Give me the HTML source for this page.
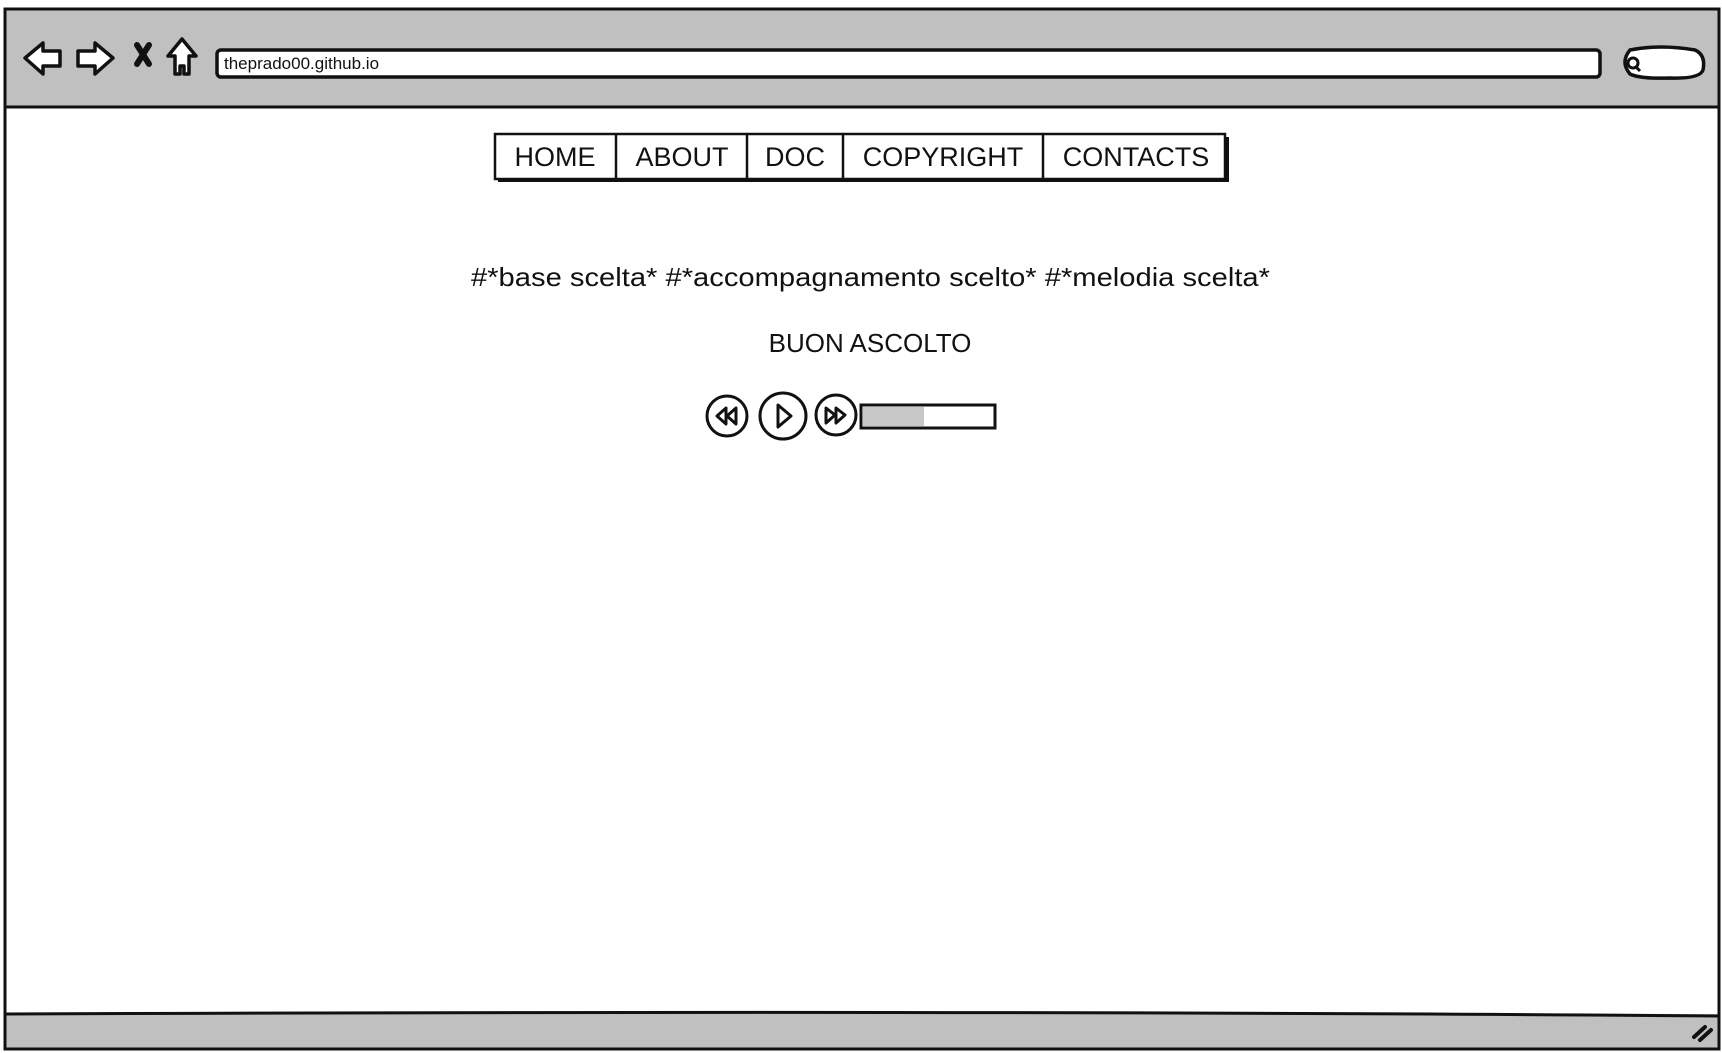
<!DOCTYPE html>
<html><head><meta charset="utf-8"><style>
html,body{margin:0;padding:0;background:#fff;width:1722px;height:1053px;overflow:hidden}
svg{display:block}
text{font-family:"Liberation Sans",sans-serif;fill:#111}
</style></head><body>
<svg width="1722" height="1053" viewBox="0 0 1722 1053">
<rect x="0" y="0" width="1722" height="1053" fill="#fff"/>
<rect x="5" y="9" width="1714" height="98" fill="#c0c0c0"/>
<path d="M5 1014 Q900 1012 1719 1014 L1719 1049 L5 1049 Z" fill="#c0c0c0"/>
<path d="M5 1014 Q1000 1010 1719 1016" fill="none" stroke="#111" stroke-width="3"/>
<rect x="5" y="9" width="1714" height="1040" fill="none" stroke="#111" stroke-width="3"/>
<line x1="5" y1="107" x2="1719" y2="107" stroke="#111" stroke-width="3"/>
<path d="M1694 1037 L1705 1027 M1700 1040 L1711 1030" stroke="#111" stroke-width="4" stroke-linecap="round"/>
<!-- nav icons -->
<path d="M25 58 L43 43 L43 51 L60 51 L60 66 L43 66 L43 74 Z" fill="#fff" stroke="#111" stroke-width="3.5" stroke-linejoin="round"/>
<path d="M113 58 L95 43 L95 51 L78 51 L78 66 L95 66 L95 74 Z" fill="#fff" stroke="#111" stroke-width="3.5" stroke-linejoin="round"/>
<path d="M137 45 L149 64 M149 45 L137 64" stroke="#111" stroke-width="6" stroke-linecap="round"/>
<path d="M182 39 L196 56 L189 56 L189 74 L184 74 L184 66 L180 66 L180 74 L175 74 L175 56 L168 56 Z" fill="#fff" stroke="#111" stroke-width="3.5" stroke-linejoin="round"/>
<rect x="217" y="50" width="1383" height="27" rx="4" fill="#fff" stroke="#111" stroke-width="3.5"/>
<text x="224" y="69" font-size="17">theprado00.github.io</text>
<path d="M1630 50 Q1660 44 1695 50 Q1706 55 1703 70 Q1700 79 1670 78 Q1640 79 1630 74 Q1620 62 1630 50 Z" fill="#fff" stroke="#111" stroke-width="3.5"/>
<circle cx="1633" cy="63" r="5" fill="none" stroke="#111" stroke-width="3"/>
<line x1="1636" y1="67" x2="1640" y2="71" stroke="#111" stroke-width="3"/>
<rect x="498" y="137" width="731" height="45" fill="#111"/>
<rect x="495" y="134" width="730" height="45" fill="#fff" stroke="#111" stroke-width="2.5"/>
<g stroke="#111" stroke-width="2.5">
<line x1="616" y1="134" x2="616" y2="179"/><line x1="747" y1="134" x2="747" y2="179"/>
<line x1="843" y1="134" x2="843" y2="179"/><line x1="1043" y1="134" x2="1043" y2="179"/>
</g>
<g font-size="27" text-anchor="middle">
<text x="555" y="166">HOME</text><text x="682" y="166">ABOUT</text>
<text x="795" y="166">DOC</text><text x="943" y="166">COPYRIGHT</text>
<text x="1136" y="166">CONTACTS</text>
</g>
<text x="471" y="286" font-size="26" textLength="799" lengthAdjust="spacingAndGlyphs">#*base scelta* #*accompagnamento scelto* #*melodia scelta*</text>
<text x="870" y="352" font-size="26" text-anchor="middle">BUON ASCOLTO</text>
<g fill="#fff" stroke="#111" stroke-width="3">
<circle cx="727" cy="416" r="20"/>
<circle cx="783" cy="416" r="23"/>
<circle cx="836" cy="415" r="20"/>
</g>
<g fill="none" stroke="#111" stroke-width="3" stroke-linejoin="round">
<path d="M726 408 L717 416 L726 424 Z M736 408 L727 416 L736 424 Z"/>
<path d="M778 405 L791 416 L778 427 Z"/>
<path d="M826 408 L835 415 L826 423 Z M836 408 L845 415 L836 423 Z"/>
</g>
<rect x="861" y="405" width="134" height="23" fill="#fff" stroke="#111" stroke-width="3"/>
<rect x="863" y="407" width="61" height="19" fill="#c8c8c8"/>
</svg>
</body></html>
